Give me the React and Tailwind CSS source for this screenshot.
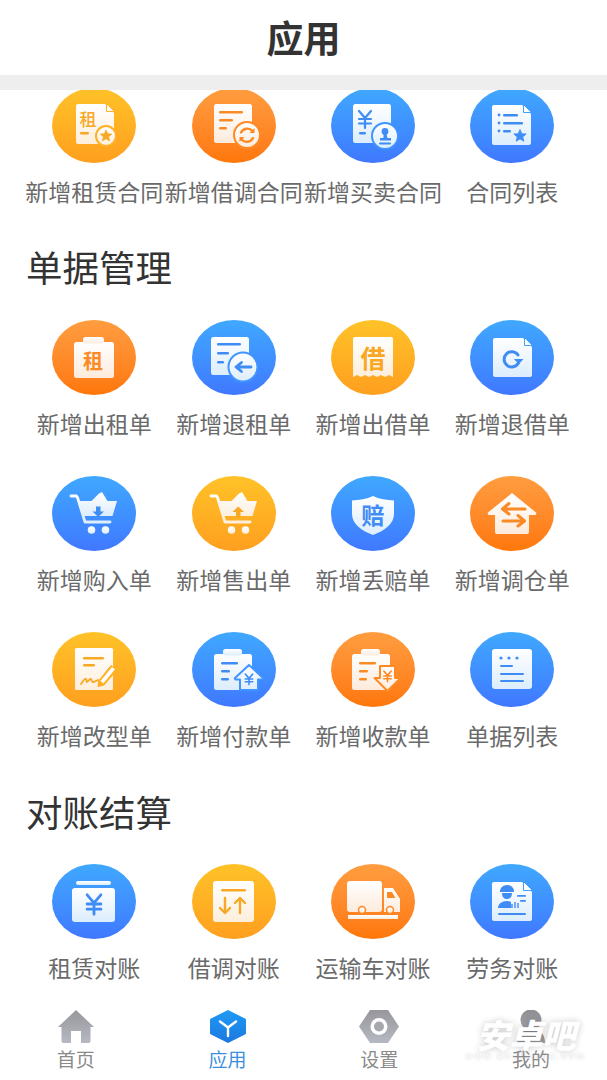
const CJK = '"Noto Sans CJK SC", "Noto Sans", sans-serif';

const TONES = {
  yellow: { bg: 'bg-linear-to-b from-[#ffc228] to-[#ff9f1f]', ink: '#f8a823', top: '#ffffff', bottom: '#fdeedb' },
  orange: { bg: 'bg-linear-to-b from-[#ff9d3f] to-[#ff7708]', ink: '#fb8a25', top: '#ffffff', bottom: '#fdebdc' },
  blue: { bg: 'bg-linear-to-b from-[#40a8ff] to-[#4078ff]', ink: '#3f8cf5', top: '#ffffff', bottom: '#dcedfc' },
};

// Small drawing helpers, all in the 84x75 space of a circle
function Bar({ x, y, w, h = 2.6, c }) {
  return <rect x={x} y={y} width={w} height={h} rx={h / 2} fill={c} />;
}

function Glyph({ x, y, size, c, weight = 700, children }) {
  return (
    <text x={x} y={y} fontSize={size} fontWeight={weight} fill={c} textAnchor="middle" dominantBaseline="central" fontFamily={CJK}>
      {children}
    </text>
  );
}

function FoldedSheet({ x, y, w, h, s, c, fold = 9 }) {
  return (
    <>
      <path d={`M${x + 2} ${y}H${x + w - fold}L${x + w} ${y + fold}V${y + h - 2}a2 2 0 0 1-2 2H${x + 2}a2 2 0 0 1-2-2V${y + 2}a2 2 0 0 1 2-2z`} fill={s} />
      <path d={`M${x + w - fold + 1.5} ${y - 0.5}L${x + w + 0.5} ${y + fold - 1.5}H${x + w - fold + 1.5}z`} fill="#ffffff" stroke={c} strokeWidth="1" />
    </>
  );
}

function Clipboard({ x, y, w, h, s }) {
  return (
    <>
      <rect x={x} y={y} width={w} height={h} rx="2.5" fill={s} />
      <rect x={x + 9} y={y - 5} width={w - 19} height="6.5" rx="2.5" fill={s} stroke="none" />
    </>
  );
}

function Yuan({ x, y, c, size = 1, width = 2.2 }) {
  return (
    <path
      d={`M${x - 6 * size} ${y - 8 * size}L${x} ${y - 1 * size}L${x + 6 * size} ${y - 8 * size}M${x} ${y - 1 * size}V${y + 9 * size}M${x - 6 * size} ${y}H${x + 6 * size}M${x - 6 * size} ${y + 4.5 * size}H${x + 6 * size}`}
      stroke={c}
      strokeWidth={width}
      fill="none"
      strokeLinecap="round"
      strokeLinejoin="round"
    />
  );
}

function Star({ x, y, r, c }) {
  const pts = [];
  for (let i = 0; i < 10; i++) {
    const rad = i % 2 ? r * 0.45 : r;
    const a = (Math.PI / 5) * i - Math.PI / 2;
    pts.push(`${x + rad * Math.cos(a)},${y + rad * Math.sin(a)}`);
  }
  return <polygon points={pts.join(' ')} fill={c} stroke={c} strokeWidth="0.8" strokeLinejoin="round" />;
}

function Badge({ x, y, r, s, c }) {
  return <circle cx={x} cy={y} r={r} fill={s} stroke={c} strokeWidth="2" />;
}

function Cart({ s }) {
  return (
    <>
      <path d="M19 20h5.500l1 1.500L33 46h25" fill="none" stroke={s} strokeWidth="2.800" strokeLinecap="round" strokeLinejoin="round" />
      <path d="M26 25h13.500L47 17.500 50 16l5.500 9h9.500L60.500 40H31z" fill={s} />
      <circle cx="39.500" cy="54" r="3.800" fill={s} />
      <circle cx="53.500" cy="54" r="3.800" fill={s} />
    </>
  );
}

const ICONS = {
  rentContract: (s, c, t) => (
    <>
      <FoldedSheet x={24} y={16} w={38} h={40} s={s} c={t} />
      <Glyph x={36} y={30} size={17} c={c} weight={500}>租</Glyph>
      <Bar x={28} y={44} w={9} c={c} />
      <Badge x={54} y={48} r={10} s={s} c={t} />
      <Star x={54} y={48} r={6} c={c} />
    </>
  ),
  lendContract: (s, c, t) => (
    <>
      <rect x="22" y="16" width="38" height="39" rx="2.5" fill={s} />
      <Bar x={27} y={23} w={24} c={c} />
      <Bar x={27} y={31} w={14} c={c} />
      <Bar x={27} y={39} w={8} c={c} />
      <Badge x={55} y={47} r={13} s={s} c={t} />
      <path d="M49 44.5a7 7 0 0 1 11.5-1.5M61 50a7 7 0 0 1-11.5 1.5" fill="none" stroke={c} strokeWidth="2.4" strokeLinecap="round" />
      <path d="M62.5 40v5h-5zM47.5 54v-5h5z" fill={c} />
    </>
  ),
  tradeContract: (s, c, t) => (
    <>
      <rect x="22" y="16" width="38" height="39" rx="2.5" fill={s} />
      <Yuan x={34} y={31} c={c} />
      <Bar x={28} y={44} w={7} c={c} />
      <Badge x={54} y={48} r={13} s={s} c={t} />
      <circle cx="54" cy="43.5" r="3.4" fill={c} />
      <path d="M52.5 46h3l1 4h3.5v2.5h-11V50h3.5z" fill={c} />
      <Bar x={48} y={54.5} w={12} h={2} c={c} />
    </>
  ),
  contractList: (s, c) => (
    <>
      <FoldedSheet x={22} y={17} w={39} h={40} s={s} c="#40a0ff" />
      <circle cx="29" cy="27" r="1.4" fill={c} />
      <Bar x={33} y={26} w={15} c={c} />
      <circle cx="29" cy="35" r="1.4" fill={c} />
      <Bar x={33} y={34} w={20} c={c} />
      <circle cx="29" cy="43" r="1.4" fill={c} />
      <Bar x={33} y={42} w={8} c={c} />
      <Star x={50} y={48} r={6.5} c={c} />
    </>
  ),
  rentOut: (s, c) => (
    <>
      <Clipboard x={22} y={22} w={40} h={36} s={s} />
      <Glyph x={41} y={40} size={20} c={c}>租</Glyph>
    </>
  ),
  rentBack: (s, c, t) => (
    <>
      <rect x="19" y="17" width="38" height="38" rx="2.5" fill={s} />
      <Bar x={25} y={23} w={24} c={c} />
      <Bar x={25} y={32} w={12} c={c} />
      <Bar x={25} y={41} w={7} c={c} />
      <Badge x={51} y={47} r={14.5} s={s} c={t} />
      <path d="M59 47H45M49.5 42.5L44 47l5.5 4.5" fill="none" stroke={c} strokeWidth="2.8" strokeLinecap="round" strokeLinejoin="round" />
    </>
  ),
  lendOut: (s, c) => (
    <>
      <path d="M24 17h36a2 2 0 0 1 2 2v38l-4-2-4 2-4-2-4 2-4-2-4 2-4-2-4 2-4-2-4 2V19a2 2 0 0 1 2-2z" fill={s} />
      <Glyph x={42} y={37} size={25} c={c}>借</Glyph>
    </>
  ),
  lendBack: (s, c) => (
    <>
      <FoldedSheet x={23} y={18} w={39} h={39} s={s} c="#40a0ff" />
      <path d="M48 35a7.6 7.6 0 1 0 .4 8" fill="none" stroke={c} strokeWidth="3" strokeLinecap="round" />
      <path d="M44 39h9.5l-4.8 5.200z" fill={c} />
    </>
  ),
  buy: (s, c) => (
    <>
      <Cart s={s} />
      <path d="M44 30.500h4.500v5H52L46.200 41 40.500 35.500H44z" fill={c} />
    </>
  ),
  sell: (s, c) => (
    <>
      <Cart s={s} />
      <path d="M44 41h4.500v-5H52L46.200 30.500 40.500 36H44z" fill={c} />
    </>
  ),
  lost: (s, c) => (
    <>
      <path d="M42 20c6 3 14 4 21 4.500V38c0 10-10 17-21 21-11-4-21-11-21-21V24.500c7-.5 15-1.500 21-4.500z" fill={s} />
      <Glyph x={42} y={38} size={23} c={c}>赔</Glyph>
    </>
  ),
  transfer: (s, c) => (
    <>
      <path d="M42 17l24 19.500a1.500 1.500 0 0 1-1 2.500h-6v17a2 2 0 0 1-2 2H27a2 2 0 0 1-2-2V39h-6a1.500 1.500 0 0 1-1-2.500z" fill={s} />
      <path d="M55 33H33M39 27.500L32.500 33l6.500 5" fill="none" stroke={c} strokeWidth="3" strokeLinecap="round" strokeLinejoin="round" />
      <path d="M33 45h21M48 39.500L54.500 45 48 50" fill="none" stroke={c} strokeWidth="3" strokeLinecap="round" strokeLinejoin="round" />
    </>
  ),
  remodel: (s, c, t) => (
    <>
      <rect x="23" y="16" width="38" height="42" rx="1.500" fill={s} />
      <Bar x={31} y={25} w={21} h={2.4} c={c} />
      <Bar x={31} y={32} w={12} h={2.4} c={c} />
      <path d="M29 52c2-3 4-6 5-5s0 3 1 3 3-4 4-3 0 3 2 3 3-1 5-2" fill="none" stroke={c} strokeWidth="1.800" strokeLinecap="round" />
      <path d="M46.500 49L59 33.500l6 4.500-13 15-6 1.500z" fill={t} stroke={t} strokeWidth="1" strokeLinejoin="round" />
      <path d="M48.500 49L60 35l3 2.300-11.500 14z" fill="#ffffff" />
    </>
  ),
  payment: (s, c, t) => (
    <>
      <Clipboard x={22} y={22} w={38} h={36} s={s} />
      <Bar x={29} y={30} w={17} c={c} />
      <Bar x={29} y={38} w={9} c={c} />
      <Bar x={29} y={46} w={8} c={c} />
      <path d="M57 33l14 13a1 1 0 0 1-1 1.500h-4V58H48V47.500h-4a1 1 0 0 1-1-1.500z" fill={s} stroke={t} strokeWidth="2" strokeLinejoin="round" />
      <Yuan x={57} y={47} c={c} size={0.62} width={1.6} />
    </>
  ),
  receipt: (s, c, t) => (
    <>
      <Clipboard x={21} y={22} w={38} h={36} s={s} />
      <Bar x={28} y={30} w={17} c={c} />
      <Bar x={28} y={38} w={9} c={c} />
      <Bar x={28} y={46} w={8} c={c} />
      <path d="M49 34h15v12h5.500L56.500 59 43.500 46H49z" fill={s} stroke={t} strokeWidth="2" strokeLinejoin="round" />
      <Yuan x={56.500} y={44} c={c} size={0.62} width={1.6} />
    </>
  ),
  billList: (s, c) => (
    <>
      <rect x="22" y="17" width="40" height="40" rx="3" fill={s} />
      <circle cx="31" cy="26" r="1.600" fill={c} />
      <circle cx="39" cy="26" r="1.600" fill={c} />
      <circle cx="47" cy="26" r="1.600" fill={c} />
      <Bar x={30} y={33} w={13} h={2} c={c} />
      <Bar x={30} y={41} w={24} h={2} c={c} />
      <Bar x={30} y={48} w={24} h={2} c={c} />
    </>
  ),
  rentBill: (s, c) => (
    <>
      <rect x="24" y="17" width="35" height="4" rx="2" fill={s} />
      <rect x="20" y="24" width="43" height="34" rx="3" fill={s} />
      <Yuan x={42} y={40} c={c} size={1.15} width={2.8} />
    </>
  ),
  lendBill: (s, c) => (
    <>
      <rect x="21" y="17" width="41" height="41" rx="3" fill={s} />
      <Bar x={29} y={25} w={25} h={2.4} c={c} />
      <path d="M33 34v15M28 44l5 5 5-5M48 49V34M43 39l5-5 5 5" fill="none" stroke={c} strokeWidth="2.400" strokeLinecap="round" strokeLinejoin="round" />
    </>
  ),
  truck: (s, c) => (
    <>
      <rect x="16" y="17" width="35" height="31" rx="3" fill={s} />
      <path d="M53 24h9l7 11v13H53z" fill={s} />
      <path d="M56 28h5l3.500 6H56z" fill={c} />
      <rect x="17" y="51" width="50" height="4" fill={s} />
      <circle cx="31" cy="46" r="3.500" fill={s} stroke={c} strokeWidth="1.500" />
      <circle cx="59" cy="46" r="3.500" fill={s} stroke={c} strokeWidth="1.500" />
    </>
  ),
  labor: (s, c) => (
    <>
      <FoldedSheet x={22} y={18} w={40} h={39} s={s} c="#40a0ff" fold={10} />
      <path d="M30 27a7 6 0 0 1 14 0v1H30z" fill={c} />
      <path d="M32 29h10c0 4-2 6-5 6s-5-2-5-6z" fill={c} />
      <path d="M28 44c0-4 4-7 9-7 2 0 3 .5 4 1v6z" fill={c} />
      <path d="M42 44v-4M45 44v-6M48 44v-5" stroke={c} strokeWidth="1.400" />
      <Bar x={47} y={31} w={9} h={1.800} c={c} />
      <Bar x={50} y={36} w={6} h={1.800} c={c} />
      <Bar x={28} y={49} w={28} h={2} c={c} />
    </>
  ),
};

const SECTIONS = [
  {
    rows: [
      ['rentContract', 'yellow', '新增租赁合同'],
      ['lendContract', 'orange', '新增借调合同'],
      ['tradeContract', 'blue', '新增买卖合同'],
      ['contractList', 'blue', '合同列表'],
    ],
  },
  {
    title: '单据管理',
    rows: [
      ['rentOut', 'orange', '新增出租单'],
      ['rentBack', 'blue', '新增退租单'],
      ['lendOut', 'yellow', '新增出借单'],
      ['lendBack', 'blue', '新增退借单'],
      ['buy', 'blue', '新增购入单'],
      ['sell', 'yellow', '新增售出单'],
      ['lost', 'blue', '新增丢赔单'],
      ['transfer', 'orange', '新增调仓单'],
      ['remodel', 'yellow', '新增改型单'],
      ['payment', 'blue', '新增付款单'],
      ['receipt', 'orange', '新增收款单'],
      ['billList', 'blue', '单据列表'],
    ],
  },
  {
    title: '对账结算',
    rows: [
      ['rentBill', 'blue', '租赁对账'],
      ['lendBill', 'yellow', '借调对账'],
      ['truck', 'orange', '运输车对账'],
      ['labor', 'blue', '劳务对账'],
    ],
  },
];

function AppIcon({ name, tone }) {
  const t = TONES[tone];
  const gid = `sheet-${tone}`;
  const accent = tone === 'blue' ? '#4094ff' : tone === 'orange' ? '#ff8a24' : '#ffb024';
  return (
    <div className={`w-[84px] h-[75px] rounded-[50%] ${t.bg}`}>
      <svg width="84" height="75" viewBox="0 0 84 75">
        <defs>
          <linearGradient id={gid} x1="0" y1="0" x2="0" y2="1">
            <stop offset="0" stopColor={t.top} />
            <stop offset="1" stopColor={t.bottom} />
          </linearGradient>
        </defs>
        {ICONS[name](`url(#${gid})`, t.ink, accent)}
      </svg>
    </div>
  );
}

function Tile({ name, tone, label }) {
  return (
    <div className="flex flex-col items-center">
      <AppIcon name={name} tone={tone} />
      <div className="mt-[15px] h-[30px] leading-[26px] text-[23px] text-[#6a6a6a] whitespace-nowrap">{label}</div>
    </div>
  );
}

function Grid({ rows }) {
  return (
    <div className="grid grid-cols-[repeat(4,139.3px)] gap-y-[36px] pl-[24.7px]">
      {rows.map(([name, tone, label]) => (
        <Tile key={label} name={name} tone={tone} label={label} />
      ))}
    </div>
  );
}

function NavItem({ label, active, children }) {
  return (
    <div className="flex flex-col items-center pt-[10px]">
      <div className="h-[33px] flex items-center justify-center">{children}</div>
      <div className={`relative z-10 mt-[4px] h-[24px] leading-[24px] text-[19px] ${active ? 'text-[#3b8fdd]' : 'text-[#8a8a8a]'}`}>{label}</div>
    </div>
  );
}

function NavGradient({ id }) {
  return (
    <defs>
      <linearGradient id={id} x1="0" y1="0" x2="0" y2="1">
        <stop offset="0" stopColor="#97979b" />
        <stop offset="1" stopColor="#b6b9c2" />
      </linearGradient>
    </defs>
  );
}

export default function App() {
  return (
    <div className="relative h-[1080px] w-[607px] flex flex-col overflow-hidden bg-white" style={{ fontFamily: CJK }}>
      <header className="h-[75px] flex items-center justify-center text-[37px] font-bold text-[#333333]">应用</header>
      <div className="h-[15px] bg-[#eeeeee]" />

      <main className="flex-1 overflow-hidden">
        <div className="-mt-[2px]">
          <Grid rows={SECTIONS[0].rows} />
        </div>
        <h2 className="mt-[35px] pl-[26px] h-[50px] leading-[48px] text-[36.5px] font-normal text-[#333333]">{SECTIONS[1].title}</h2>
        <div className="mt-[27px]">
          <Grid rows={SECTIONS[1].rows} />
        </div>
        <h2 className="mt-[36px] pl-[26px] h-[50px] leading-[48px] text-[36.5px] font-normal text-[#333333]">{SECTIONS[2].title}</h2>
        <div className="mt-[26px]">
          <Grid rows={SECTIONS[2].rows} />
        </div>
      </main>

      <nav className="h-[80px] grid grid-cols-4">
        <NavItem label="首页">
          <svg width="36" height="33" viewBox="0 0 36 33">
            <NavGradient id="nav-home" />
            <path d="M18 0l18 17h-3.500v14a2 2 0 0 1-2 2H23V21H13v12H5.500a2 2 0 0 1-2-2V17H0z" fill="url(#nav-home)" />
          </svg>
        </NavItem>
        <NavItem label="应用" active>
          <svg width="36" height="33" viewBox="0 0 36 33">
            <defs>
              <linearGradient id="nav-app" x1="0" y1="0" x2="0" y2="1">
                <stop offset="0" stopColor="#1f9af5" />
                <stop offset="1" stopColor="#1b78e0" />
              </linearGradient>
            </defs>
            <path d="M18 0l17 8.500a1.500 1.500 0 0 1 1 1.500v13a1.500 1.500 0 0 1-1 1.500L18 33 1 24.500A1.500 1.500 0 0 1 0 23V10a1.500 1.500 0 0 1 1-1.500z" fill="url(#nav-app)" />
            <path d="M18 17.500V26M18 17.500l-8-6M18 17.500l8-6" fill="none" stroke="#ffffff" strokeWidth="2.400" strokeLinecap="round" />
          </svg>
        </NavItem>
        <NavItem label="设置">
          <svg width="40" height="33" viewBox="0 0 40 33">
            <NavGradient id="nav-gear" />
            <path d="M11 0h18l11 16.500L29 33H11L0 16.500z" fill="url(#nav-gear)" />
            <circle cx="20" cy="16.500" r="8.500" fill="#ffffff" />
            <circle cx="20" cy="16.500" r="5" fill="#a6a8ae" />
          </svg>
        </NavItem>
        <NavItem label="我的">
          <svg width="36" height="33" viewBox="0 0 36 33">
            <defs>
              <linearGradient id="nav-me" x1="0" y1="0" x2="0" y2="1">
                <stop offset="0" stopColor="#8e8e92" />
                <stop offset="1" stopColor="#a4a6ad" />
              </linearGradient>
            </defs>
            <circle cx="18" cy="10" r="10.500" fill="url(#nav-me)" />
            <path d="M4 33c0-9 5-14 14-14s14 5 14 14z" fill="url(#nav-me)" />
          </svg>
        </NavItem>
      </nav>

      {/* watermark sits over the last tab */}
      <div className="absolute left-[474px] top-[1014px] w-[104px] flex flex-col items-center text-white pointer-events-none">
        <div className="text-[33px] leading-[40px] font-black italic whitespace-nowrap [text-shadow:0_0_7px_rgba(0,0,0,0.22)]">安卓吧</div>
        <div className="-mt-[4px] text-[9px] leading-[12px] tracking-[2.5px] whitespace-nowrap [text-shadow:0_0_3px_rgba(0,0,0,0.25)]" style={{ fontFamily: '"Liberation Sans", sans-serif' }}>www.anzhuoba.com</div>
      </div>
    </div>
  );
}
